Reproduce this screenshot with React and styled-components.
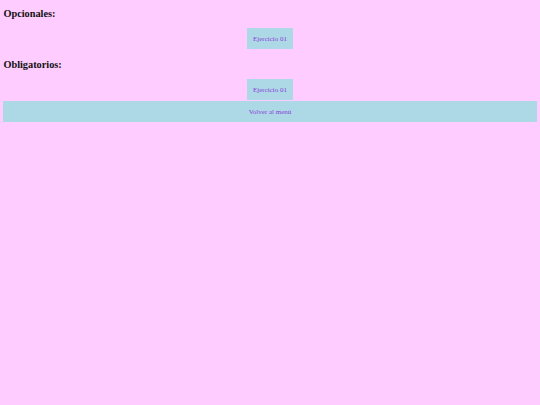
import React from 'react';
import styled, { createGlobalStyle } from 'styled-components';

const GlobalStyle = createGlobalStyle`
  html, body {
    background: #ffccff;
  }
  body {
    margin: 0;
    padding: 0 3.4px;
    font-family: "Liberation Serif", "Times New Roman", serif;
  }
`;

const Page = styled.div`
  display: flex;
  flex-direction: column;
`;

const Title = styled.h2`
  margin: 8.4px 0;
  font-size: 10.3px;
  font-weight: bold;
  line-height: 11.6px;
  color: #111;
`;

const Row = styled.div`
  display: flex;
  justify-content: center;
  margin-bottom: 1.3px;
`;

const Button = styled.a`
  display: flex;
  align-items: center;
  justify-content: center;
  width: ${(p) => (p.$wide ? '100%' : '46px')};
  height: 21px;
  background: #add8e6;
  color: #8a3fd8;
  font-size: 7px;
  text-decoration: none;
  cursor: pointer;
`;

const sections = [
  { title: 'Opcionales:', items: ['Ejercicio 01'] },
  { title: 'Obligatorios:', items: ['Ejercicio 01'] },
];

export default function App() {
  return (
    <Page>
      <GlobalStyle />
      {sections.map((section) => (
        <React.Fragment key={section.title}>
          <Title>{section.title}</Title>
          {section.items.map((item) => (
            <Row key={item}>
              <Button>{item}</Button>
            </Row>
          ))}
        </React.Fragment>
      ))}
      <Row>
        <Button $wide>Volver al menú</Button>
      </Row>
    </Page>
  );
}
